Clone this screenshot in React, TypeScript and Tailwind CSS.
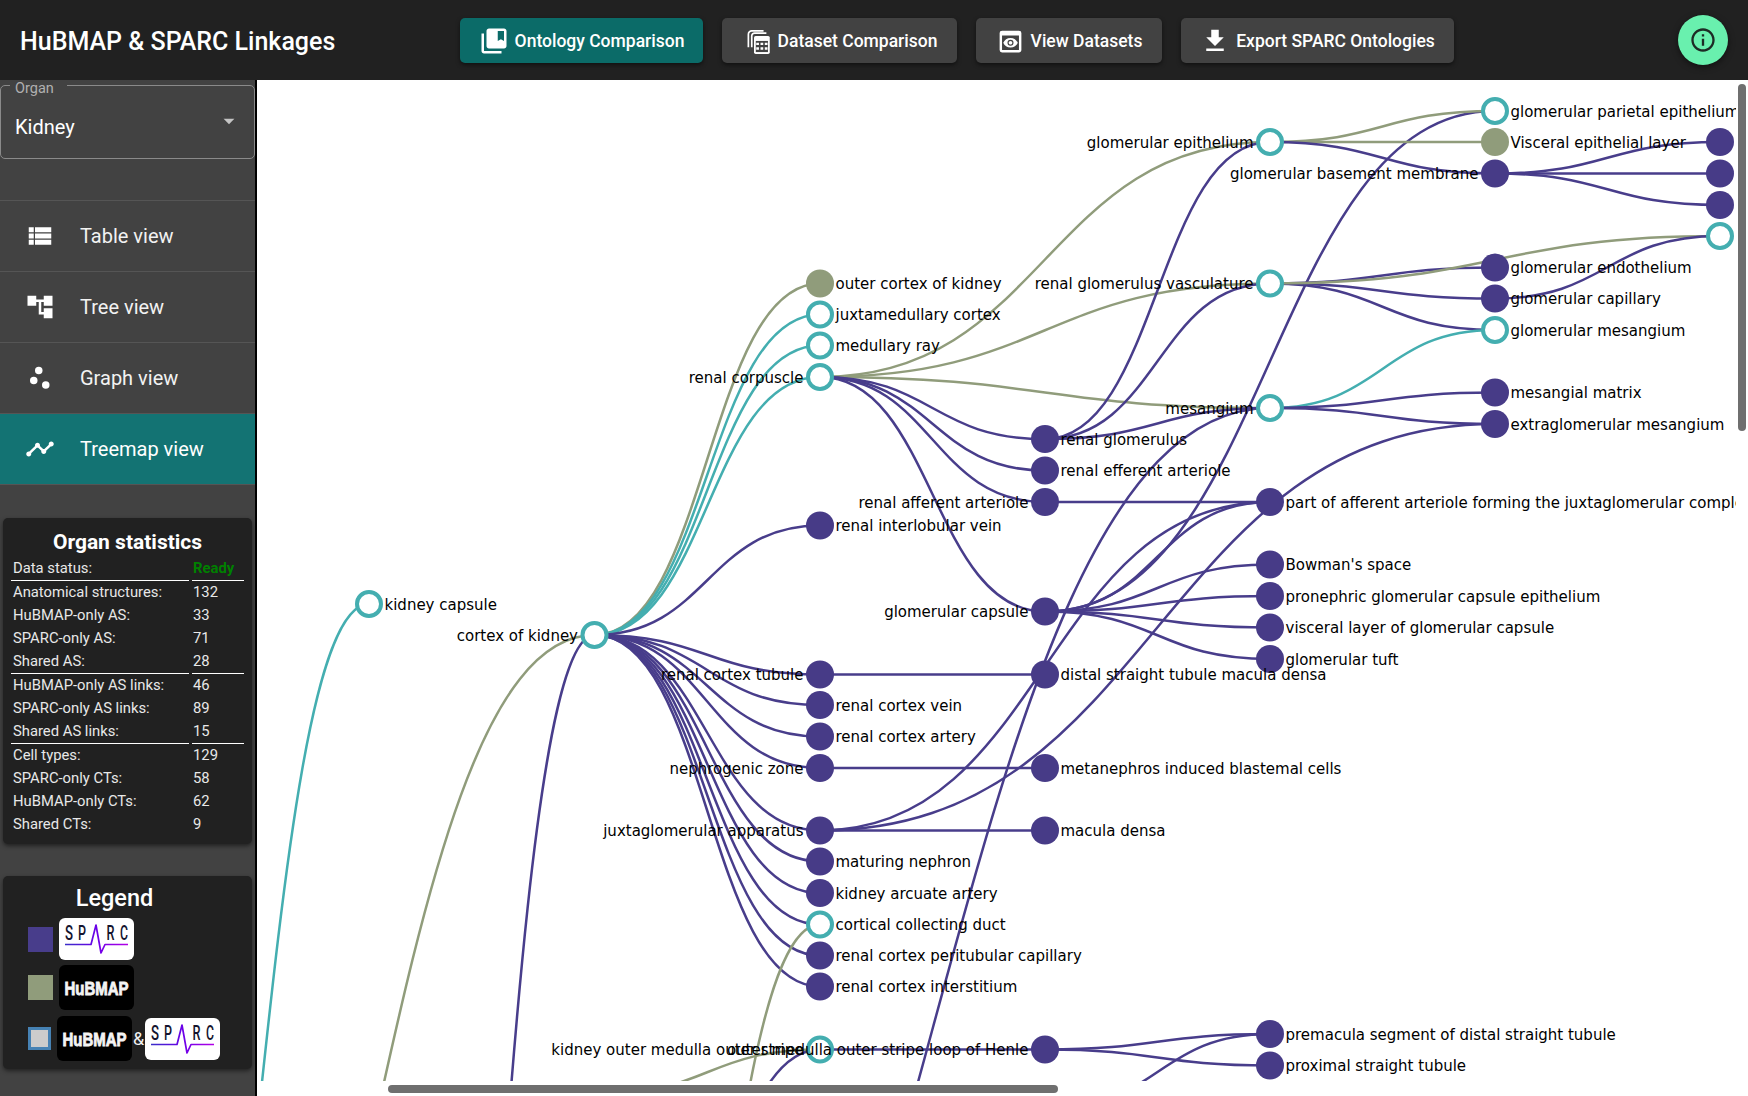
import React from "react";
import {
  MdCollectionsBookmark,
  MdFileDownload,
  MdInfoOutline,
  MdPreview,
  MdViewList,
  MdAccountTree,
  MdScatterPlot,
  MdTimeline,
  MdArrowDropDown,
} from "react-icons/md";

const PURPLE = "#483d8b";
const GREEN = "#909c7b";
const TEAL = "#44aeb0";

type Kind = "sparc" | "hubmap" | "both";
type NodeDef = { x: number; y: number; label?: string; side?: "l" | "r"; kind: Kind };

const C0 = 144;
const C1 = 369;
const C2 = 594.5;
const C3 = 820;
const C4 = 1045;
const C5 = 1270;
const C6 = 1495;
const C7 = 1720;

const nodes: Record<string, NodeDef> = {
  capsule: { x: C1, y: 604, label: "kidney capsule", kind: "both" },
  cortex: { x: C2, y: 635, label: "cortex of kidney", side: "l", kind: "both" },
  outerCortex: { x: C3, y: 283.5, label: "outer cortex of kidney", kind: "hubmap" },
  juxtaCortex: { x: C3, y: 314.5, label: "juxtamedullary cortex", kind: "both" },
  ray: { x: C3, y: 345.5, label: "medullary ray", kind: "both" },
  corpuscle: { x: C3, y: 377, label: "renal corpuscle", side: "l", kind: "both" },
  interlobular: { x: C3, y: 525.5, label: "renal interlobular vein", kind: "sparc" },
  tubule: { x: C3, y: 674.5, label: "renal cortex tubule", side: "l", kind: "sparc" },
  vein: { x: C3, y: 705, label: "renal cortex vein", kind: "sparc" },
  artery: { x: C3, y: 736.5, label: "renal cortex artery", kind: "sparc" },
  nephrogenic: { x: C3, y: 768, label: "nephrogenic zone", side: "l", kind: "sparc" },
  juxtaglom: { x: C3, y: 830.5, label: "juxtaglomerular apparatus", side: "l", kind: "sparc" },
  maturing: { x: C3, y: 861.5, label: "maturing nephron", kind: "sparc" },
  arcuate: { x: C3, y: 893, label: "kidney arcuate artery", kind: "sparc" },
  collecting: { x: C3, y: 924.5, label: "cortical collecting duct", kind: "both" },
  peritubular: { x: C3, y: 955.5, label: "renal cortex peritubular capillary", kind: "sparc" },
  interstitium: { x: C3, y: 986.5, label: "renal cortex interstitium", kind: "sparc" },
  outerStripe: { x: C3, y: 1049.5, label: "kidney outer medulla outer stripe", side: "l", kind: "both" },
  glomerulus: { x: C4, y: 439, label: "renal glomerulus", kind: "sparc" },
  efferent: { x: C4, y: 470.5, label: "renal efferent arteriole", kind: "sparc" },
  afferent: { x: C4, y: 502, label: "renal afferent arteriole", side: "l", kind: "sparc" },
  glomCapsule: { x: C4, y: 611.5, label: "glomerular capsule", side: "l", kind: "sparc" },
  distal: { x: C4, y: 674.5, label: "distal straight tubule macula densa", kind: "sparc" },
  metanephros: { x: C4, y: 768, label: "metanephros induced blastemal cells", kind: "sparc" },
  macula: { x: C4, y: 830.5, label: "macula densa", kind: "sparc" },
  henle: { x: C4, y: 1049.5, label: "outer medulla outer stripe loop of Henle", side: "l", kind: "sparc" },
  epithelium: { x: C5, y: 142, label: "glomerular epithelium", side: "l", kind: "both" },
  vasculature: { x: C5, y: 283.5, label: "renal glomerulus vasculature", side: "l", kind: "both" },
  mesangium: { x: C5, y: 408, label: "mesangium", side: "l", kind: "both" },
  partAfferent: { x: C5, y: 502, label: "part of afferent arteriole forming the juxtaglomerular complex", kind: "sparc" },
  bowman: { x: C5, y: 564.5, label: "Bowman's space", kind: "sparc" },
  pronephric: { x: C5, y: 596, label: "pronephric glomerular capsule epithelium", kind: "sparc" },
  visceralLayer: { x: C5, y: 627.5, label: "visceral layer of glomerular capsule", kind: "sparc" },
  tuft: { x: C5, y: 659, label: "glomerular tuft", kind: "sparc" },
  premacula: { x: C5, y: 1034, label: "premacula segment of distal straight tubule", kind: "sparc" },
  proximal: { x: C5, y: 1065.5, label: "proximal straight tubule", kind: "sparc" },
  parietal: { x: C6, y: 111, label: "glomerular parietal epithelium", kind: "both" },
  visceral: { x: C6, y: 142, label: "Visceral epithelial layer", kind: "hubmap" },
  basement: { x: C6, y: 173.5, label: "glomerular basement membrane", side: "l", kind: "sparc" },
  endothelium: { x: C6, y: 267.5, label: "glomerular endothelium", kind: "sparc" },
  capillary: { x: C6, y: 298.5, label: "glomerular capillary", kind: "sparc" },
  glomMesangium: { x: C6, y: 330, label: "glomerular mesangium", kind: "both" },
  matrix: { x: C6, y: 392.5, label: "mesangial matrix", kind: "sparc" },
  extraglom: { x: C6, y: 424, label: "extraglomerular mesangium", kind: "sparc" },
  right1: { x: C7, y: 142, kind: "sparc" },
  right2: { x: C7, y: 173.5, kind: "sparc" },
  right3: { x: C7, y: 205, kind: "sparc" },
  right4: { x: C7, y: 236, kind: "both" },
  // parents that sit outside the scrolled view
  root: { x: C0, y: 1663, kind: "both" },
  off1: { x: C1, y: 2384, kind: "sparc" },
  off2: { x: C2, y: 1652, kind: "sparc" },
  off3: { x: C2, y: 1850, kind: "hubmap" },
  off4: { x: C2, y: 1095, kind: "hubmap" },
  off5: { x: C2, y: 1450, kind: "sparc" },
  off6: { x: C4, y: 1110, kind: "sparc" },
};

const links: [string, string, string][] = [
  ["root", "capsule", TEAL],
  ["root", "cortex", GREEN],
  ["off1", "cortex", PURPLE],
  ["cortex", "outerCortex", GREEN],
  ["cortex", "juxtaCortex", TEAL],
  ["cortex", "ray", TEAL],
  ["cortex", "corpuscle", TEAL],
  ["cortex", "interlobular", PURPLE],
  ["cortex", "tubule", PURPLE],
  ["cortex", "vein", PURPLE],
  ["cortex", "artery", PURPLE],
  ["cortex", "nephrogenic", PURPLE],
  ["cortex", "juxtaglom", PURPLE],
  ["cortex", "maturing", PURPLE],
  ["cortex", "arcuate", PURPLE],
  ["cortex", "collecting", PURPLE],
  ["cortex", "peritubular", PURPLE],
  ["cortex", "interstitium", PURPLE],
  ["off3", "collecting", GREEN],
  ["off4", "outerStripe", GREEN],
  ["off5", "outerStripe", PURPLE],
  ["off2", "mesangium", PURPLE],
  ["off6", "premacula", PURPLE],
  ["corpuscle", "epithelium", GREEN],
  ["corpuscle", "vasculature", GREEN],
  ["corpuscle", "mesangium", GREEN],
  ["corpuscle", "glomerulus", PURPLE],
  ["corpuscle", "efferent", PURPLE],
  ["corpuscle", "afferent", PURPLE],
  ["corpuscle", "glomCapsule", PURPLE],
  ["glomerulus", "epithelium", PURPLE],
  ["glomerulus", "vasculature", PURPLE],
  ["glomerulus", "mesangium", PURPLE],
  ["tubule", "distal", PURPLE],
  ["nephrogenic", "metanephros", PURPLE],
  ["juxtaglom", "macula", PURPLE],
  ["juxtaglom", "partAfferent", PURPLE],
  ["juxtaglom", "extraglom", PURPLE],
  ["afferent", "partAfferent", PURPLE],
  ["glomCapsule", "partAfferent", PURPLE],
  ["glomCapsule", "parietal", PURPLE],
  ["glomCapsule", "bowman", PURPLE],
  ["glomCapsule", "pronephric", PURPLE],
  ["glomCapsule", "visceralLayer", PURPLE],
  ["glomCapsule", "tuft", PURPLE],
  ["outerStripe", "henle", PURPLE],
  ["henle", "premacula", PURPLE],
  ["henle", "proximal", PURPLE],
  ["epithelium", "parietal", GREEN],
  ["epithelium", "visceral", GREEN],
  ["epithelium", "basement", PURPLE],
  ["vasculature", "endothelium", PURPLE],
  ["vasculature", "capillary", PURPLE],
  ["vasculature", "glomMesangium", PURPLE],
  ["vasculature", "right4", GREEN],
  ["capillary", "right4", PURPLE],
  ["mesangium", "glomMesangium", TEAL],
  ["mesangium", "matrix", PURPLE],
  ["mesangium", "extraglom", PURPLE],
  ["basement", "right1", PURPLE],
  ["basement", "right2", PURPLE],
  ["basement", "right3", PURPLE],
];

function linkPath(a: NodeDef, b: NodeDef) {
  const mx = (a.x + b.x) / 2;
  return `M${a.x},${a.y}C${mx},${a.y} ${mx},${b.y} ${b.x},${b.y}`;
}

function Tree() {
  return (
    <svg viewBox="257 80 1479 1001" className="block w-[1479px] h-[1001px]">
      {links.map(([from, to, color]) => (
        <path
          key={from + to}
          d={linkPath(nodes[from], nodes[to])}
          fill="none"
          stroke={color}
          strokeWidth={2.5}
        />
      ))}
      {Object.entries(nodes).map(([id, n]) =>
        n.kind === "both" ? (
          <circle key={id} cx={n.x} cy={n.y} r={12} fill="#fff" stroke={TEAL} strokeWidth={4} />
        ) : (
          <circle key={id} cx={n.x} cy={n.y} r={14} fill={n.kind === "sparc" ? "#473b87" : GREEN} />
        )
      )}
      {Object.entries(nodes).map(([id, n]) =>
        n.label ? (
          <text
            key={id}
            x={n.side === "l" ? n.x - 16.5 : n.x + 15.5}
            y={n.y}
            dy="5.5"
            textAnchor={n.side === "l" ? "end" : "start"}
            fontSize={15}
            fill="#000"
            style={{ fontFamily: '"DejaVu Sans", sans-serif' }}
          >
            {n.label}
          </text>
        ) : null
      )}
    </svg>
  );
}

function DatasetIcon() {
  return (
    <svg viewBox="0 0 24 24" className="w-[27px] h-[27px] ml-[3px]" fill="none">
      <path d="M16.5 2.5H6a3 3 0 0 0-3 3v11.5" stroke="#fff" strokeWidth="1.5" />
      <path d="M19 4.5H8.5a2.5 2.5 0 0 0-2.5 2.5v10" stroke="#fff" strokeWidth="1.5" />
      <rect x="8" y="7" width="14" height="16" rx="1.5" fill="#fff" />
      <rect x="9.6" y="11.5" width="10.8" height="9.9" fill="#424242" />
      <path d="M10 13h2.4v2H10zM13.8 13h2.4v2h-2.4zM17.6 13H20v2h-2.4zM10 17h2.4v2.4H10zM13.8 17h2.4v2.4h-2.4zM17.6 17H20v2.4h-2.4z" fill="#fff" />
    </svg>
  );
}

function TopButton({
  icon,
  label,
  width,
  active,
}: {
  icon: React.ReactNode;
  label: string;
  width: string;
  active?: boolean;
}) {
  return (
    <button
      className={`${width} h-[45px] pt-[2px] rounded-[5px] flex items-center justify-center gap-[6px] text-[17.5px] font-medium text-white shadow-[0_2px_4px_rgba(0,0,0,0.5)] ${
        active ? "bg-[#0b6b68]" : "bg-[#424242]"
      }`}
    >
      {icon}
      <span>{label}</span>
    </button>
  );
}

function Header() {
  return (
    <header className="h-[80px] bg-[#212121] flex items-center relative shrink-0">
      <h1 className="w-[460px] pl-[20px] pt-[3px] text-[25px] font-medium text-white whitespace-nowrap">
        HuBMAP &amp; SPARC Linkages
      </h1>
      <div className="flex gap-[19px]">
        <TopButton active width="w-[243px]" label="Ontology Comparison" icon={<MdCollectionsBookmark size={30} />} />
        <TopButton width="w-[235px]" label="Dataset Comparison" icon={<DatasetIcon />} />
        <TopButton width="w-[186px]" label="View Datasets" icon={<MdPreview size={29} />} />
        <TopButton width="w-[273px]" label="Export SPARC Ontologies" icon={<MdFileDownload size={30} />} />
      </div>
      <button className="ml-auto mr-[20px] w-[50px] h-[50px] rounded-full bg-[#69f0ae] flex items-center justify-center text-[#1d2b25] shadow-[0_2px_6px_rgba(0,0,0,0.5)]">
        <MdInfoOutline size={28} />
      </button>
    </header>
  );
}

function NavItem({ icon, label, active }: { icon: React.ReactNode; label: string; active?: boolean }) {
  return (
    <div
      className={`h-[71px] flex items-center border-t border-[#555] text-[20px] ${
        active ? "bg-[#137373] text-white" : "text-[#f2f2f2]"
      }`}
    >
      <span className="w-[80px] flex justify-center text-white">{icon}</span>
      <span>{label}</span>
    </div>
  );
}

const statRows: { k: string; v: string; line?: boolean; ready?: boolean }[] = [
  { k: "Data status:", v: "Ready", line: true, ready: true },
  { k: "Anatomical structures:", v: "132" },
  { k: "HuBMAP-only AS:", v: "33" },
  { k: "SPARC-only AS:", v: "71" },
  { k: "Shared AS:", v: "28", line: true },
  { k: "HuBMAP-only AS links:", v: "46" },
  { k: "SPARC-only AS links:", v: "89" },
  { k: "Shared AS links:", v: "15", line: true },
  { k: "Cell types:", v: "129" },
  { k: "SPARC-only CTs:", v: "58" },
  { k: "HuBMAP-only CTs:", v: "62" },
  { k: "Shared CTs:", v: "9" },
];

function Stats() {
  return (
    <section className="mt-[33px] mx-[3px] h-[326px] rounded-[5px] bg-[#212121] shadow-[0_2px_4px_rgba(0,0,0,0.5)] pt-[10px]">
      <h2 className="h-[29px] leading-[29px] text-center text-[21px] font-bold text-white">Organ statistics</h2>
      <div className="grid grid-cols-[178px_52px] gap-x-[3px] pl-[8px]">
        {statRows.map((r) => (
          <React.Fragment key={r.k}>
            <div
              className={`pl-[2px] text-[14.8px] text-[#e8e8e8] whitespace-nowrap flex items-center ${
                r.line ? "h-[24px] border-b border-white" : "h-[23px]"
              }`}
            >
              {r.k}
            </div>
            <div
              className={`pl-[1px] text-[14.8px] flex items-center ${
                r.line ? "h-[24px] border-b border-white" : "h-[23px]"
              } ${r.ready ? "font-bold text-[#008000]" : "text-[#e8e8e8]"}`}
            >
              {r.v}
            </div>
          </React.Fragment>
        ))}
      </div>
    </section>
  );
}

function SparcLogo() {
  const letter = (ch: string, x: number) => (
    <text
      x={x}
      y={22}
      fontSize={20}
      fontWeight={500}
      textLength={8}
      lengthAdjust="spacingAndGlyphs"
      fill="#14142e"
      style={{ fontFamily: "Roboto, sans-serif" }}
    >
      {ch}
    </text>
  );
  return (
    <svg viewBox="0 0 75 42" className="block w-[75px] h-[42px] shrink-0">
      <defs>
        <linearGradient id="pulse" x1="0" x2="1" y1="0" y2="0">
          <stop offset="0" stopColor="#3a2fc8" />
          <stop offset="0.5" stopColor="#6a00e8" />
          <stop offset="1" stopColor="#b400e6" />
        </linearGradient>
      </defs>
      <rect width="75" height="42" rx="6" fill="#fff" />
      {letter("S", 6)}
      {letter("P", 19)}
      {letter("R", 47.5)}
      {letter("C", 61)}
      <path
        d="M6 26.5H32L37 7L42 35L46 26.5H69"
        fill="none"
        stroke="url(#pulse)"
        strokeWidth="1.7"
        strokeLinejoin="round"
      />
    </svg>
  );
}

function HubmapLogo({ h }: { h: number }) {
  return (
    <svg viewBox={`0 0 75 ${h}`} className="block w-[75px] shrink-0" style={{ height: h }}>
      <rect width="75" height={h} rx="6" fill="#000" />
      <text
        x={5.5}
        y={h / 2 + 7}
        fontSize={19}
        fontWeight={700}
        textLength={64}
        lengthAdjust="spacingAndGlyphs"
        fill="#f4f4f4"
        stroke="#f4f4f4"
        strokeWidth={0.9}
        style={{ fontFamily: '"Liberation Sans", sans-serif' }}
      >
        HuBMAP
      </text>
    </svg>
  );
}

function Legend() {
  return (
    <section className="mt-[32px] mx-[3px] h-[193px] rounded-[5px] bg-[#212121] shadow-[0_2px_4px_rgba(0,0,0,0.5)] pl-[25px] pt-[9px]">
      <h2 className="h-[27px] leading-[27px] w-[173px] text-center text-[23.5px] font-medium text-white">Legend</h2>
      <div className="flex items-center gap-[6px] mt-[6px]">
        <span className="w-[25px] h-[25px] bg-[#483d8b]" />
        <SparcLogo />
      </div>
      <div className="flex items-center gap-[6px] mt-[5px]">
        <span className="w-[25px] h-[25px] bg-[#909c7b]" />
        <HubmapLogo h={45} />
      </div>
      <div className="flex items-center mt-[6px]">
        <span className="w-[23px] h-[23px] bg-[#cccccc] border-[3px] border-[#4682b4] mr-[6px]" />
        <HubmapLogo h={45} />
        <span className="w-[13px] text-center text-[18px] text-[#f2f2f2]">&amp;</span>
        <SparcLogo />
      </div>
    </section>
  );
}

function Sidebar() {
  return (
    <aside className="w-[257px] shrink-0 bg-[#424242] border-r-2 border-black overflow-hidden">
      <div className="relative mt-[5px] h-[74px] border border-[#8a8a8a] rounded-[5px] flex items-center pl-[14px] text-[20px] text-white">
        <span className="absolute left-[9px] -top-[5px] pl-[5px] pr-[13px] bg-[#424242] text-[14.5px] leading-[16px] text-[#b0b0b0]">
          Organ
        </span>
        <span className="mt-[9px]">Kidney</span>
        <MdArrowDropDown size={26} className="absolute right-[12px] top-[22px] text-[#c4c4c4]" />
      </div>
      <nav className="mt-[41px] border-b border-[#555]">
        <NavItem label="Table view" icon={<MdViewList size={30} />} />
        <NavItem label="Tree view" icon={<MdAccountTree size={30} />} />
        <NavItem label="Graph view" icon={<MdScatterPlot size={30} />} />
        <NavItem active label="Treemap view" icon={<MdTimeline size={30} />} />
      </nav>
      <Stats />
      <Legend />
    </aside>
  );
}

export default function App() {
  return (
    <div className="w-[1748px] h-[1096px] flex flex-col overflow-hidden bg-white" style={{ fontFamily: "Roboto, sans-serif" }}>
      <Header />
      <div className="flex flex-1 min-h-0">
        <Sidebar />
        <main className="relative flex-1 bg-white overflow-hidden">
          <Tree />
          <div className="absolute right-[2px] top-[4px] w-[8px] h-[347px] rounded-full bg-[#6f6f6f]" />
          <div className="absolute left-[131px] top-[1005px] w-[670px] h-[8px] rounded-full bg-[#6f6f6f]" />
        </main>
      </div>
    </div>
  );
}
